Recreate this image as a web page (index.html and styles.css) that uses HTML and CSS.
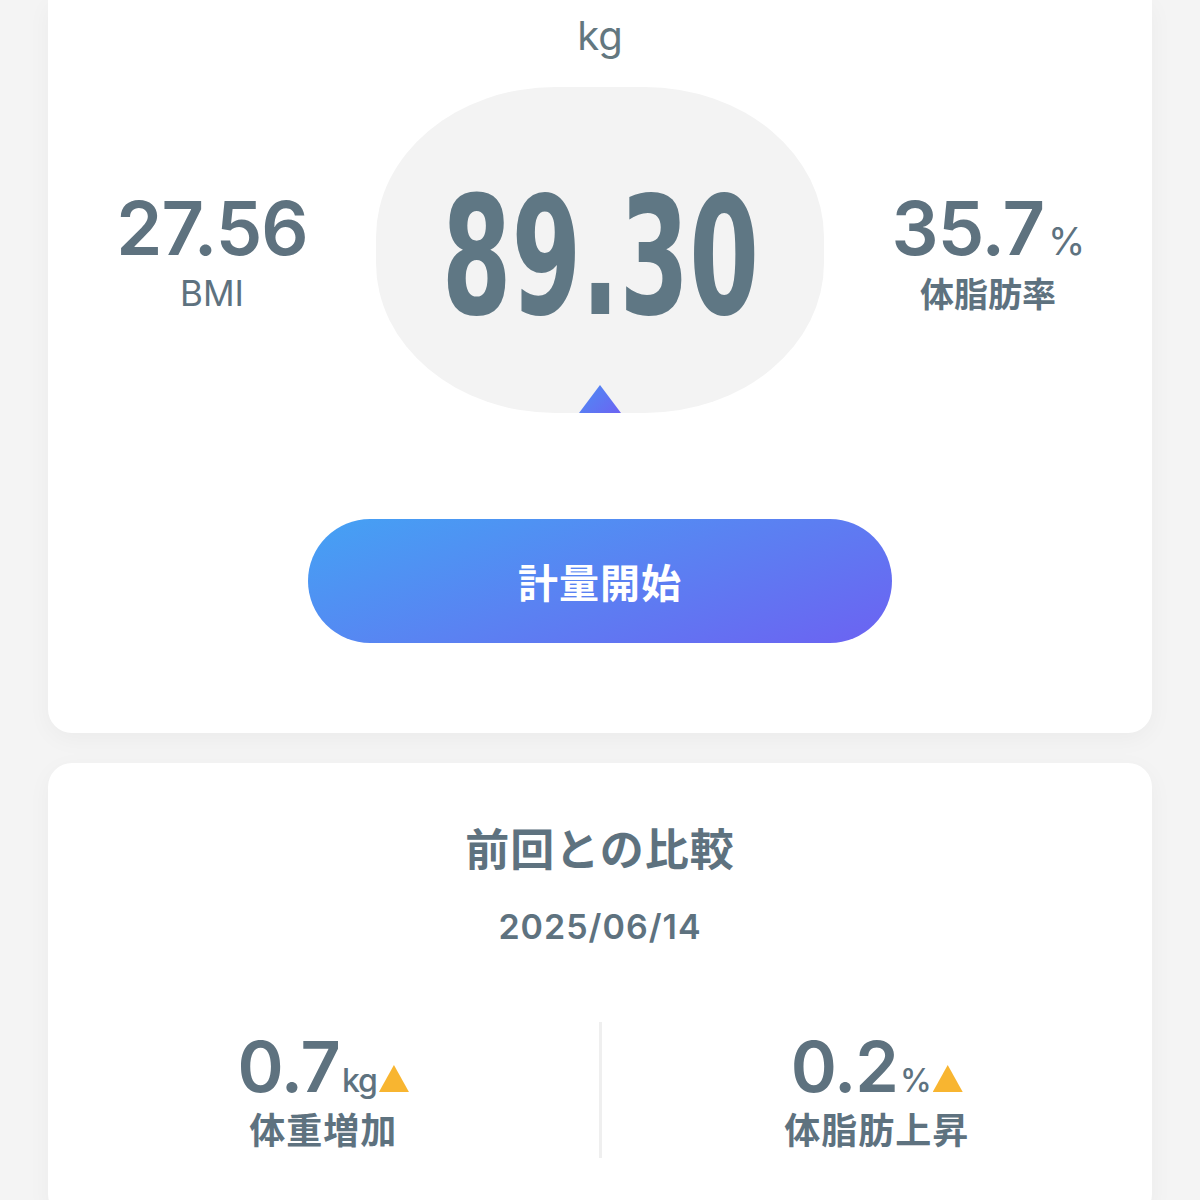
FILE: index.html
```html
<!DOCTYPE html>
<html lang="ja">
<head>
    <meta charset="UTF-8">
    <meta name="viewport" content="width=device-width, initial-scale=1.0">
    <title>体重計</title>
    <link rel="stylesheet" href="styles.css">
</head>
<body>
    <div class="page">
        <!-- 今回の計測 -->
        <div class="card card-top">
            <div class="unit">kg</div>
            <div class="scale">
                <div class="stat">
                    <div class="stat-num">27.56</div>
                    <div class="stat-label latin">BMI</div>
                </div>
                <div class="blob">
                    <div class="weight">89.30</div>
                    <div class="pointer"></div>
                </div>
                <div class="stat">
                    <div class="stat-num">35.7<span class="small">%</span></div>
                    <div class="stat-label">体脂肪率</div>
                </div>
            </div>
            <button class="start">計量開始</button>
        </div>

        <!-- 前回との比較 -->
        <div class="card card-compare">
            <div class="title">前回との比較</div>
            <div class="date">2025/06/14</div>
            <div class="diff">
                <div class="diff-item">
                    <div class="diff-num">0.7<span class="small">kg</span><span class="up"></span></div>
                    <div class="diff-label">体重増加</div>
                </div>
                <div class="line"></div>
                <div class="diff-item">
                    <div class="diff-num">0.2<span class="small">%</span><span class="up"></span></div>
                    <div class="diff-label">体脂肪上昇</div>
                </div>
            </div>
        </div>
    </div>
</body>
</html>
```

FILE: styles.css
```css
*{margin: 0;padding: 0;box-sizing: border-box;}
body{
    background: #f4f4f4;
    color: #5e727f;
    font-family: "Inter", "Noto Sans CJK JP", sans-serif;
}
.page{
    padding: 0 48px;
}
.card{
    background: #fff;
    border-radius: 24px;
    box-shadow: 0 6px 24px rgba(0,0,0,.04);
}
.card-top{
    border-radius: 0 0 24px 24px;
    padding: 8px 0 90px;
    display: flex;
    flex-direction: column;
    align-items: center;
}
.unit{
    font-size: 40px;
    line-height: 56px;
    color: #63777f;
}
.scale{
    width: 100%;
    display: grid;
    grid-template-columns: 1fr 448px 1fr;
    align-items: center;
    margin-top: 23px;
}
.stat{
    text-align: center;
    padding-top: 2px;
}
.stat-num{
    font-size: 74px;
    font-weight: 600;
    line-height: 84px;
    letter-spacing: -1px;
}
.stat-num .small{
    font-size: 38px;
    font-weight: 400;
    line-height: 1;
    margin-left: 4px;
}
.stat-label{
    font-family: "Noto Sans CJK JP", sans-serif;
    font-size: 34px;
    font-weight: 700;
    line-height: 46px;
}
.stat-label.latin{
    font-family: "Inter", sans-serif;
    font-weight: 400;
    font-size: 35px;
}
.blob{
    position: relative;
    height: 326px;
    background: #f3f3f3;
    border-radius: 40% / 46%;
    display: flex;
    align-items: center;
    justify-content: center;
}
.weight{
    font-family: "DejaVu Sans Condensed", "DejaVu Sans", sans-serif;
    font-weight: 700;
    font-size: 164px;
    line-height: 1;
    color: #5f7784;
    transform: scale(0.68, 1);
    margin-top: 16px;
}
.pointer{
    position: absolute;
    left: 50%;
    bottom: 0;
    width: 42px;
    height: 28px;
    margin-left: -21px;
    background: linear-gradient(135deg, #4c8ef4, #6c63f2);
    clip-path: polygon(50% 0, 100% 100%, 0 100%);
}
.start{
    margin-top: 106px;
    width: 584px;
    height: 124px;
    border: none;
    border-radius: 62px;
    background: linear-gradient(160deg, #44a2f4 0%, #5a82f2 50%, #6c62f2 100%);
    color: #fff;
    font-family: "Noto Sans CJK JP", sans-serif;
    font-size: 40px;
    font-weight: 700;
    letter-spacing: 1px;
}
.card-compare{
    margin-top: 30px;
    padding: 55px 0 60px;
    text-align: center;
}
.title{
    font-family: "Noto Sans CJK JP", sans-serif;
    font-size: 44px;
    font-weight: 700;
    line-height: 58px;
    letter-spacing: 1px;
}
.date{
    margin-top: 29px;
    font-size: 34px;
    font-weight: 600;
    line-height: 44px;
    letter-spacing: 1px;
}
.diff{
    margin-top: 81px;
    display: flex;
    align-items: flex-start;
}
.diff-item{
    flex: 1;
}
.line{
    width: 3px;
    height: 136px;
    margin-top: -8px;
    background: #efefef;
}
.diff-num{
    font-size: 70px;
    font-weight: 600;
    line-height: 74px;
    letter-spacing: -1px;
}
.diff-num .small{
    font-size: 32px;
    font-weight: 500;
    line-height: 1;
    margin-left: 2px;
}
.up{
    display: inline-block;
    width: 30px;
    height: 27px;
    background: #f8b530;
    clip-path: polygon(50% 0, 100% 100%, 0 100%);
    margin-left: 2px;
}
.diff-label{
    font-family: "Noto Sans CJK JP", sans-serif;
    font-size: 36px;
    font-weight: 700;
    line-height: 48px;
    letter-spacing: 1px;
}
```
